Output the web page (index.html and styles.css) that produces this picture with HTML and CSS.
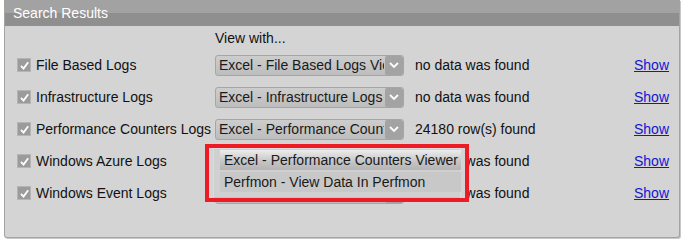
FILE: index.html
```html
<!DOCTYPE html>
<html>
<head>
<meta charset="utf-8">
<link rel="stylesheet" href="styles.css">
</head>
<body>
<div class="panel">
  <div class="header">Search Results</div>
  <div class="grid">
    <div></div><div class="viewwith">View with...</div><div></div><div></div>

    <label class="lbl"><span class="cb"><svg viewBox="0 0 13 13" width="13" height="13"><path d="M3 6.8 L5.5 9.5 L10.2 3.2" fill="none" stroke="#fff" stroke-width="1.8"/></svg></span>File Based Logs</label>
    <div class="dd"><span class="ddtext">Excel - File Based Logs Viewer</span><span class="ddbtn"><svg viewBox="0 0 10 6" width="10" height="6"><path d="M1 1 L5 5 L9 1" fill="none" stroke="#fff" stroke-width="1.8"/></svg></span></div>
    <div class="status">no data was found</div>
    <a class="show" href="#">Show</a>

    <label class="lbl"><span class="cb"><svg viewBox="0 0 13 13" width="13" height="13"><path d="M3 6.8 L5.5 9.5 L10.2 3.2" fill="none" stroke="#fff" stroke-width="1.8"/></svg></span>Infrastructure Logs</label>
    <div class="dd"><span class="ddtext">Excel - Infrastructure Logs Viewer</span><span class="ddbtn"><svg viewBox="0 0 10 6" width="10" height="6"><path d="M1 1 L5 5 L9 1" fill="none" stroke="#fff" stroke-width="1.8"/></svg></span></div>
    <div class="status">no data was found</div>
    <a class="show" href="#">Show</a>

    <label class="lbl"><span class="cb"><svg viewBox="0 0 13 13" width="13" height="13"><path d="M3 6.8 L5.5 9.5 L10.2 3.2" fill="none" stroke="#fff" stroke-width="1.8"/></svg></span>Performance Counters Logs</label>
    <div class="dd"><span class="ddtext">Excel - Performance Counters Viewer</span><span class="ddbtn"><svg viewBox="0 0 10 6" width="10" height="6"><path d="M1 1 L5 5 L9 1" fill="none" stroke="#fff" stroke-width="1.8"/></svg></span></div>
    <div class="status">24180 row(s) found</div>
    <a class="show" href="#">Show</a>

    <label class="lbl"><span class="cb"><svg viewBox="0 0 13 13" width="13" height="13"><path d="M3 6.8 L5.5 9.5 L10.2 3.2" fill="none" stroke="#fff" stroke-width="1.8"/></svg></span>Windows Azure Logs</label>
    <div class="dd"><span class="ddtext">Excel - Windows Azure Logs Viewer</span><span class="ddbtn"><svg viewBox="0 0 10 6" width="10" height="6"><path d="M1 1 L5 5 L9 1" fill="none" stroke="#fff" stroke-width="1.8"/></svg></span></div>
    <div class="status">no data was found</div>
    <a class="show" href="#">Show</a>

    <label class="lbl"><span class="cb"><svg viewBox="0 0 13 13" width="13" height="13"><path d="M3 6.8 L5.5 9.5 L10.2 3.2" fill="none" stroke="#fff" stroke-width="1.8"/></svg></span>Windows Event Logs</label>
    <div class="dd"><span class="ddtext">Excel - Windows Event Logs Viewer</span><span class="ddbtn"><svg viewBox="0 0 10 6" width="10" height="6"><path d="M1 1 L5 5 L9 1" fill="none" stroke="#fff" stroke-width="1.8"/></svg></span></div>
    <div class="status">no data was found</div>
    <a class="show" href="#">Show</a>
  </div>
</div>
<div class="highlight">
  <div class="menu">
    <div class="item sel">Excel - Performance Counters Viewer</div>
    <div class="item">Perfmon - View Data In Perfmon</div>
  </div>
</div>
</body>
</html>
```

FILE: styles.css
```css
html, body {
  margin: 0;
  padding: 0;
  background: #ffffff;
}
body {
  position: relative;
  width: 684px;
  height: 242px;
  font-family: "Liberation Sans", Arial, sans-serif;
  font-size: 14px;
  color: #111;
}
.panel {
  margin-left: 4px;
  width: 674px;
  height: 237px;
  background: #d4d4d4;
  border: 1px solid #a3a3a3;
  border-top: none;
  border-radius: 0 0 3px 3px;
  box-shadow: 1px 1px 0 #c8c8c8;
}
.header {
  height: 26px;
  box-sizing: border-box;
  padding: 5px 0 0 8px;
  color: #fff;
  background: linear-gradient(#a2a2a2 0, #a2a2a2 13px, #8f8f8f 13px, #8f8f8f 26px);
  line-height: 16px;
}
.grid {
  display: grid;
  grid-template-columns: 198px 200px 219px auto;
  grid-template-rows: 23px repeat(5, 32px);
  padding-left: 12px;
  align-items: center;
}
.viewwith {
  padding-top: 1px;
}
.lbl {
  display: flex;
  align-items: center;
  white-space: nowrap;
}
.cb {
  width: 14px;
  height: 14px;
  margin-right: 5px;
  background: #9b9b9b;
  border: 1px solid #b4b4b4;
  box-sizing: border-box;
  display: flex;
  align-items: center;
  justify-content: center;
}
.cb svg {
  display: block;
  flex: none;
}
.dd {
  width: 189px;
  height: 21px;
  box-sizing: border-box;
  border: 1px solid #a6a6a6;
  border-radius: 3px;
  background: linear-gradient(#cdcdcd, #bdbdbd);
  display: flex;
  align-items: center;
  overflow: hidden;
}
.ddtext {
  flex: 1;
  white-space: nowrap;
  overflow: hidden;
  padding-left: 3px;
  color: #1a1a1a;
}
.ddbtn {
  width: 18px;
  height: 19px;
  margin-left: 1px;
  background: #a3a3a3;
  border-radius: 2px;
  display: flex;
  align-items: center;
  justify-content: center;
  flex: none;
}
.ddbtn svg {
  display: block;
}
.status {
  white-space: nowrap;
}
.show {
  color: #1414d2;
  text-decoration: underline;
}
.highlight {
  position: absolute;
  left: 205px;
  top: 144px;
  width: 264px;
  height: 58px;
  box-sizing: border-box;
  border: 4px solid #ed1c24;
  background: #d4d4d4;
  padding: 0 4px 0 4px;
}
.menu {
  height: 50px;
  box-sizing: border-box;
  background: #d0d0d0;
  border: 1px solid #dcdcdc;
  border-bottom-color: #c4c4c4;
  padding: 1px 3px 2px 6px;
  display: flex;
  flex-direction: column;
  gap: 2px;
}
.item {
  height: 20px;
  width: 241px;
  box-sizing: border-box;
  padding-left: 4px;
  line-height: 20px;
  white-space: nowrap;
  overflow: hidden;
  background: #c8c8c8;
  color: #1a1a1a;
}
.item.sel {
  background: linear-gradient(#ececec, #c4c4c4 60%, #b4b4b4);
}
```
